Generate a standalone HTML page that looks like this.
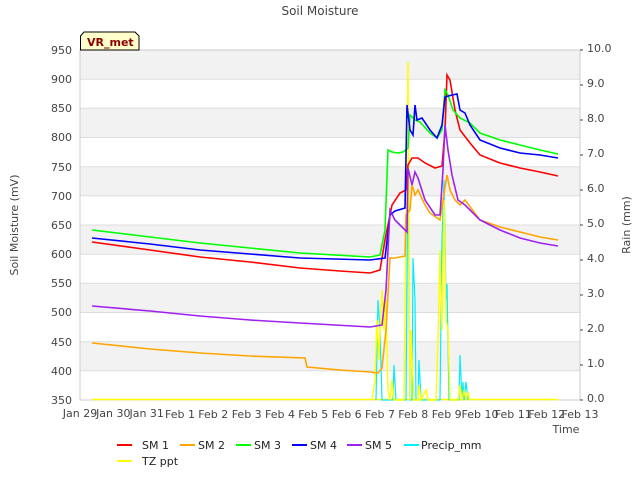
<!DOCTYPE html>
<html><head><meta charset="utf-8"><style>
html,body{margin:0;padding:0;background:#fff;}
svg{display:block;font-family:"DejaVu Sans","Liberation Sans",sans-serif;}
</style></head><body>
<svg width="640" height="480" viewBox="0 0 640 480" xmlns="http://www.w3.org/2000/svg">
<rect width="640" height="480" fill="#fff"/>
<text x="320" y="15" font-size="12" fill="#444" text-anchor="middle">Soil Moisture</text>
<g fill="#f2f2f2">
<rect x="80" y="50" width="500" height="29.2"/>
<rect x="80" y="108.3" width="500" height="29.2"/>
<rect x="80" y="166.7" width="500" height="29.2"/>
<rect x="80" y="225" width="500" height="29.2"/>
<rect x="80" y="283.3" width="500" height="29.2"/>
<rect x="80" y="341.7" width="500" height="29.2"/>
</g>
<g stroke="#ddd" stroke-width="1">
<line x1="80" y1="79.2" x2="580" y2="79.2"/><line x1="80" y1="108.3" x2="580" y2="108.3"/>
<line x1="80" y1="137.5" x2="580" y2="137.5"/><line x1="80" y1="166.7" x2="580" y2="166.7"/>
<line x1="80" y1="195.8" x2="580" y2="195.8"/><line x1="80" y1="225" x2="580" y2="225"/>
<line x1="80" y1="254.2" x2="580" y2="254.2"/><line x1="80" y1="283.3" x2="580" y2="283.3"/>
<line x1="80" y1="312.5" x2="580" y2="312.5"/><line x1="80" y1="341.7" x2="580" y2="341.7"/>
<line x1="80" y1="370.8" x2="580" y2="370.8"/>
</g>
<rect x="80" y="50" width="500" height="350" fill="none" stroke="#ccc"/>
<g font-size="11" fill="#444" text-anchor="end">
<text x="72" y="54">950</text><text x="72" y="83">900</text><text x="72" y="112">850</text>
<text x="72" y="141">800</text><text x="72" y="171">750</text><text x="72" y="200">700</text>
<text x="72" y="229">650</text><text x="72" y="258">600</text><text x="72" y="287">550</text>
<text x="72" y="316">500</text><text x="72" y="346">450</text><text x="72" y="375">400</text>
<text x="72" y="404">350</text>
</g>
<g font-size="11" fill="#444">
<text x="587" y="52">10.0</text><text x="587" y="87">9.0</text><text x="587" y="122">8.0</text>
<text x="587" y="157">7.0</text><text x="587" y="192">6.0</text><text x="587" y="227">5.0</text>
<text x="587" y="262">4.0</text><text x="587" y="297">3.0</text><text x="587" y="332">2.0</text>
<text x="587" y="367">1.0</text><text x="587" y="402">0.0</text>
</g>
<g stroke="#444">
<line x1="580" y1="50" x2="583" y2="50"/><line x1="580" y1="85" x2="583" y2="85"/><line x1="580" y1="120" x2="583" y2="120"/><line x1="580" y1="155" x2="583" y2="155"/><line x1="580" y1="190" x2="583" y2="190"/><line x1="580" y1="225" x2="583" y2="225"/><line x1="580" y1="260" x2="583" y2="260"/><line x1="580" y1="295" x2="583" y2="295"/><line x1="580" y1="330" x2="583" y2="330"/><line x1="580" y1="365" x2="583" y2="365"/><line x1="580" y1="400" x2="583" y2="400"/>
</g>
<text transform="translate(18,225) rotate(-90)" font-size="11" fill="#444" text-anchor="middle">Soil Moisture (mV)</text>
<text transform="translate(630,225) rotate(-90)" font-size="11" fill="#444" text-anchor="middle">Rain (mm)</text>
<g font-size="11" fill="#444" text-anchor="middle">
<text x="80" y="417">Jan 29</text><text x="113.3" y="417">Jan 30</text><text x="146.7" y="417">Jan 31</text>
<text x="180" y="418">Feb 1</text><text x="213.3" y="418">Feb 2</text><text x="246.7" y="418">Feb 3</text>
<text x="280" y="418">Feb 4</text><text x="313.3" y="418">Feb 5</text><text x="346.7" y="418">Feb 6</text>
<text x="380" y="418">Feb 7</text><text x="413.3" y="418">Feb 8</text><text x="446.7" y="418">Feb 9</text>
<text x="480" y="418">Feb 10</text><text x="513.3" y="418">Feb 11</text><text x="546.7" y="418">Feb 12</text>
<text x="580" y="418">Feb 13</text>
<text x="566" y="433">Time</text>
</g>
<line x1="92" y1="399.5" x2="558" y2="399.5" stroke="#ffff00" stroke-width="1.5"/>
<g fill="none" stroke-width="1.2">
<polyline stroke="#00eeff" points="376,400 378,300 380,330 382,400 393,400 394,365 396,400 406,400 408,165 410,400 412,400 413,258 415,300 416,400 418,400 419,360 421,400 440,400 442,240 444,180 446,300 447,284 449,400 459,400 460,355 462,400 463,382 464,400 466,382 468,400"/>
<polyline stroke="#ffff00" stroke-width="1.4" points="372,400 375,380 377,320 379,360 380,330 382,290 384,330 386,300 388,390 390,400 392,380 394,400 404,400 406,230 408,62 410,400 411,330 412,360 414,400 418,400 419,385 421,400 426,390 428,400 436,400 438,340 440,250 442,330 444,200 446,320 448,330 450,400 458,400 460,385 462,400 464,390 466,400 468,392 470,400"/>
<polyline stroke="#ff0000" stroke-width="1.6" points="92,242 150,250 200,257 250,262 300,268 340,271 370,273 380,270 385,240 392,205 400,193 406,190 408,165 412,158 418,158 425,163 435,168 442,166 445,130 447,75 450,80 455,110 460,130 470,143 480,155 500,163 520,168 540,172 558,176"/>
<polyline stroke="#ffa500" stroke-width="1.6" points="92,343 150,349 200,353 250,356 305,358 307,367 340,370 370,372 378,373 382,368 386,330 390,258 395,258 405,256 406,215 410,210 412,185 415,195 418,190 425,205 430,213 440,220 443,200 447,175 450,190 455,200 460,205 465,200 480,220 500,227 520,232 540,237 558,240"/>
<polyline stroke="#00ff00" stroke-width="1.6" points="92,230 150,237 200,243 250,248 300,253 370,257 380,255 385,230 388,150 392,152 398,153 403,152 408,148 410,115 415,120 420,122 430,133 437,138 442,130 445,90 448,95 453,110 460,118 470,123 480,133 500,140 520,145 540,150 558,154"/>
<polyline stroke="#0000ff" stroke-width="1.6" points="92,238 150,244 200,250 250,254 300,258 370,260 385,258 390,215 395,211 405,208 407,105 410,130 413,135 415,105 417,120 422,118 430,130 437,138 442,125 445,97 452,95 457,94 460,110 465,113 470,125 480,140 500,148 520,153 540,155 558,158"/>
<polyline stroke="#a020f0" stroke-width="1.6" points="92,306 150,311 200,316 250,320 300,323 370,327 382,325 386,290 390,210 395,220 400,225 407,232 408,168 412,185 415,172 418,178 425,200 435,215 440,215 443,170 445,125 448,150 452,175 458,200 465,205 480,220 500,230 520,238 540,243 558,246"/>
</g>
<path d="M80.5,50 L80.5,36 L84,32 L135,32 L139,36 L139,50 Z" fill="#ffffcc" stroke="#000" stroke-width="1"/>
<text x="87" y="46" font-size="11" font-weight="bold" fill="#8b0000">VR_met</text>
<g stroke-width="2">
<line x1="117" y1="445" x2="132" y2="445" stroke="#ff0000"/>
<line x1="180" y1="445" x2="195" y2="445" stroke="#ffa500"/>
<line x1="236" y1="445" x2="251" y2="445" stroke="#00ff00"/>
<line x1="292" y1="445" x2="307" y2="445" stroke="#0000ff"/>
<line x1="347" y1="445" x2="362" y2="445" stroke="#a020f0"/>
<line x1="404" y1="445" x2="419" y2="445" stroke="#00eeff"/>
<line x1="117" y1="461" x2="132" y2="461" stroke="#ffff00"/>
</g>
<g font-size="11" fill="#222">
<text x="142" y="449">SM 1</text><text x="198" y="449">SM 2</text><text x="254" y="449">SM 3</text>
<text x="310" y="449">SM 4</text><text x="365" y="449">SM 5</text><text x="421" y="449">Precip_mm</text>
<text x="142" y="465">TZ ppt</text>
</g>
</svg>
</body></html>
